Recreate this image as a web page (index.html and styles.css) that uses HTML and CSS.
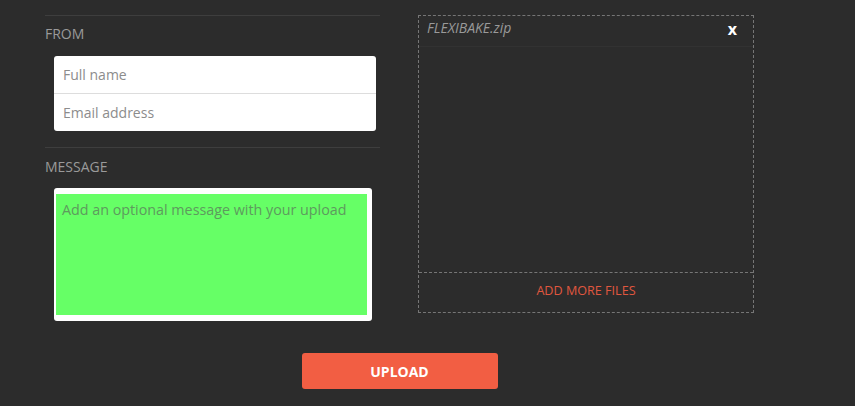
FILE: index.html
```html
<!DOCTYPE html>
<html lang="en">
<head>
  <meta charset="UTF-8">
  <meta name="viewport" content="width=device-width, initial-scale=1">
  <title>Upload</title>
  <link rel="stylesheet" href="styles.css">
</head>
<body>
  <div class="container">
    <div class="columns">
      <div class="details">
        <div class="section">
          <div class="label">From</div>
          <div class="fields">
            <input type="text" placeholder="Full name">
            <input type="email" placeholder="Email address">
          </div>
        </div>
        <div class="section">
          <div class="label">Message</div>
          <div class="message-box">
            <textarea placeholder="Add an optional message with your upload"></textarea>
          </div>
        </div>
      </div>
      <div class="files">
        <div class="file-row">
          <span class="file-name">FLEXIBAKE.zip</span>
          <span class="file-remove">x</span>
        </div>
        <div class="file-list"></div>
        <div class="add-more">Add more files</div>
      </div>
    </div>
    <div class="actions">
      <button class="upload">Upload</button>
    </div>
  </div>
</body>
</html>
```

FILE: styles.css
```css
body, html {
  margin: 0;
  padding: 0;
  width: 100%;
  height: 100%;
  background-color: #2c2c2c; /* Dark background */
  font-family: "Open Sans", sans-serif;
  color: #fff;
}
.container {
  width: 709px;
  margin-left: 45px;
  padding-top: 15px;
}
.columns {
  display: flex;
  justify-content: space-between;
  align-items: flex-start;
}
/* Left column: sender + message */
.details {
  width: 335px;
}
.section {
  border-top: 1px solid #3e3e3e;
  padding-top: 8px;
  padding-bottom: 16px;
}
.section + .section {
  padding-bottom: 0;
  padding-top: 9px;
}
.label {
  font-size: 14px;
  line-height: 20px;
  text-transform: uppercase;
  color: #9a9a9a;
  margin-bottom: 12px;
}
.section + .section .label {
  margin-bottom: 11px;
}
.fields {
  margin-left: 9px;
  width: 322px;
  background: #fff;
  border-radius: 3px;
  overflow: hidden;
}
.fields input {
  display: block;
  box-sizing: border-box;
  width: 100%;
  height: 37px;
  border: none;
  padding: 0 9px;
  font-family: "Open Sans", sans-serif;
  font-size: 14px;
  color: #333;
  background: transparent;
  outline: none;
}
.fields input + input {
  height: 38px;
  border-top: 1px solid #ddd;
}
.fields input::placeholder {
  color: #8c8c8c;
}
/* White frame round the green message area */
.message-box {
  margin-left: 9px;
  width: 311px;
  padding: 6px 5px 6px 2px;
  background: #fff;
  border-radius: 3px;
}
.message-box textarea {
  display: block;
  box-sizing: border-box;
  width: 311px;
  height: 121px;
  border: none;
  margin: 0;
  padding: 6px 6px;
  resize: none;
  outline: none;
  background: #66ff66;
  font-family: "Open Sans", sans-serif;
  font-size: 14.3px;
  line-height: 20px;
  color: #333;
}
.message-box textarea::placeholder {
  color: #5e9a5e;
}
/* Right column: dropped files */
.files {
  box-sizing: border-box;
  width: 336px;
  height: 298px;
  border: 1px dashed #767676;
  display: flex;
  flex-direction: column;
}
.file-row {
  display: flex;
  justify-content: space-between;
  align-items: flex-start;
  height: 31px;
  padding: 2px 16px 0 8px;
  box-sizing: border-box;
  border-bottom: 1px solid #323232;
}
.file-name {
  font-style: italic;
  font-size: 14px;
  line-height: 20px;
  color: #9a9a9a;
}
.file-remove {
  font-weight: bold;
  font-size: 16px;
  line-height: 22px;
  color: #fff;
  cursor: pointer;
}
.file-list {
  flex: 1;
}
.add-more {
  border-top: 1px dashed #767676;
  height: 40px;
  box-sizing: border-box;
  padding-top: 8px;
  text-align: center;
  font-size: 12.6px;
  line-height: 20px;
  text-transform: uppercase;
  color: #e0573f;
  cursor: pointer;
}
.actions {
  display: flex;
  justify-content: center;
  margin-top: 32px;
}
.upload {
  width: 196px;
  height: 36px;
  border: none;
  border-radius: 3px;
  background-color: #f25e43;
  color: #fff;
  font-family: "Open Sans", sans-serif;
  font-weight: bold;
  font-size: 14px;
  text-transform: uppercase;
  cursor: pointer;
}
```
